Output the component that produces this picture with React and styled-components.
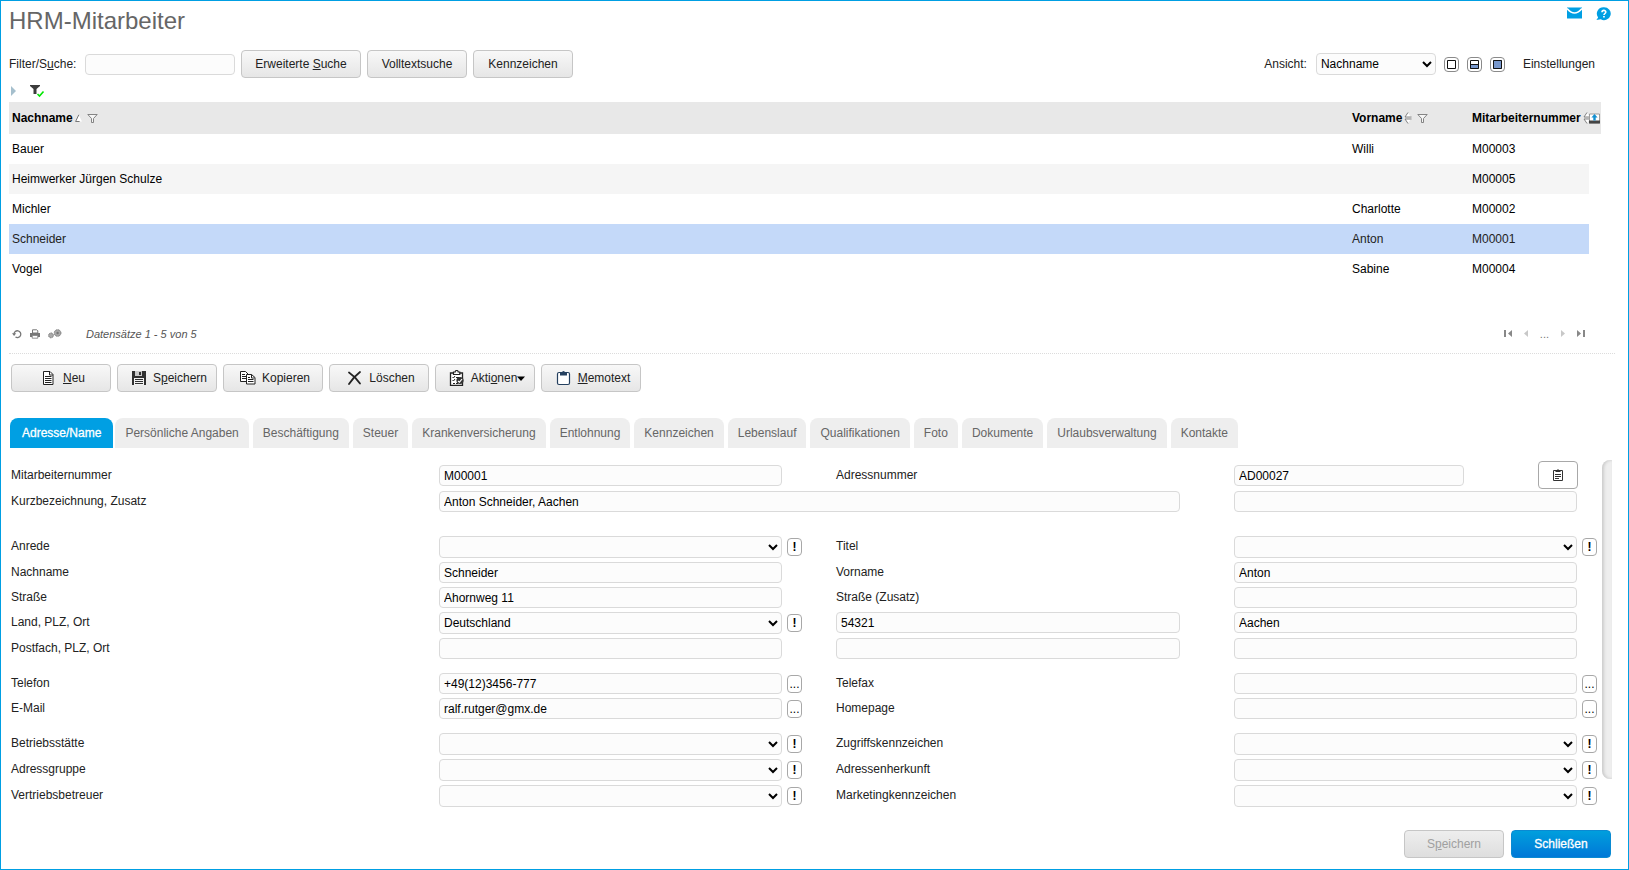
import React, { useState } from "react";
import styled, { createGlobalStyle, css } from "styled-components";

const GlobalStyle = createGlobalStyle`
    * {
        box-sizing: border-box;
    }
    body {
        margin: 0;
        background-color: #ffffff;
        color: #222222;
    }
    body, button, input, select, table {
        font-family: "Liberation Sans", Arial, sans-serif;
        font-size: 12px;
    }
    svg {
        display: block;
        flex: none;
    }
`;

const Page = styled.div`
    display: flex;
    flex-direction: column;
    min-height: 100vh;
    padding: 0 13px 11px 8px;
    border: 1px solid #009fe3;
`;

const Header = styled.header`
    display: flex;
    justify-content: space-between;
    height: 49px;
`;
const Title = styled.h1`
    margin: 0;
    font-size: 24px;
    font-weight: normal;
    line-height: 40px;
    color: #666666;
`;
const Header_links = styled.nav`
    display: flex;
    gap: 14px;
    padding: 6px 4px 0 0;
`;

const plainButton = css`
    display: flex;
    align-items: center;
    justify-content: center;
    padding: 0;
    border: none;
    background: none;
    cursor: pointer;
`;
const Icon_button = styled.button`
    ${plainButton}
`;

const field = css`
    min-width: 0;
    margin: 0;
    border: 1px solid #dadada;
    border-radius: 4px;
    background-color: #fcfcfc;
    color: #000000;
`;
const Text_input = styled.input`
    ${field}
    flex: ${(props) => (props.$width ? "none" : "1")};
    width: ${(props) => props.$width || "auto"};
    height: 21px;
    padding: 0 4px;
`;
const Select = styled.select`
    ${field}
    flex: ${(props) => (props.$width ? "none" : "1")};
    width: ${(props) => props.$width || "auto"};
    height: 22px;
    padding: 0;
`;

const Button = styled.button`
    display: flex;
    align-items: center;
    justify-content: center;
    width: ${(props) => props.$width || "100px"};
    height: 28px;
    padding: 0;
    border: 1px solid #c6c6c6;
    border-radius: 4px;
    background: linear-gradient(#f8f8f8, #e6e6e6);
    color: #222222;
    cursor: pointer;
    &:disabled {
        background: linear-gradient(#eeeeee, #dedede);
        color: #a0a0a0;
        cursor: default;
    }
`;
const Primary_button = styled(Button)`
    border-color: #0a8ad2;
    background: linear-gradient(#009fdd, #0078d7);
    color: #ffffff;
    -webkit-text-stroke: 0.3px #ffffff;
`;
const Button_icon = styled.span`
    width: 16px;
    margin: 0 6px 0 4px;
`;

const Filter_bar = styled.div`
    display: flex;
    align-items: center;
    justify-content: space-between;
    padding-right: 20px;
`;
const Filter_group = styled.div`
    display: flex;
    align-items: center;
    gap: 6px;
`;
const Filter_label = styled.label`
    min-width: 70px;
`;
const View_label = styled.label`
    margin-right: 3px;
`;
const View_modes = styled.div`
    display: flex;
    gap: 8px;
    margin: 0 12px 0 2px;
`;
const View_mode = styled.button`
    ${plainButton}
    width: 15px;
    height: 15px;
    border: 1px solid #8a8a8a;
    border-radius: 4px;
`;
const Settings_link = styled.a`
    color: #222222;
    text-decoration: none;
`;
const Filter_state = styled.div`
    display: flex;
    align-items: center;
    gap: 13px;
    height: 24px;
    padding: 2px 0 0 2px;
`;

const List = styled.div`
    min-height: 212px;
    padding-right: 14px;
`;
const Table = styled.table`
    width: 100%;
    table-layout: fixed;
    border-collapse: collapse;
    color: #000000;
`;
const Head_cell = styled.th`
    width: ${(props) => props.$width || "auto"};
    height: 32px;
    padding: ${(props) => (props.$tool ? "0" : "0 0 0 3px")};
    overflow: hidden;
    background-color: #e8e8e8;
    text-align: left;
`;
const Head_content = styled.div`
    display: flex;
    align-items: center;
    gap: 5px;
`;
const Head_label = styled.span`
    display: flex;
    align-items: center;
    gap: 2px;
`;
const Row = styled.tr`
    background-color: ${(props) => (props.$selected ? "#c4d9f9" : props.$striped ? "#f5f5f5" : "#ffffff")};
    color: ${(props) => (props.$selected ? "#222222" : "#000000")};
    cursor: pointer;
`;
const Cell = styled.td`
    height: 30px;
    padding: 0 0 0 3px;
`;
const Spare_cell = styled.td`
    background-color: #ffffff;
`;

const List_footer = styled.div`
    display: flex;
    align-items: center;
    justify-content: space-between;
    height: 40px;
    border-bottom: 1px dotted #dcdcdc;
`;
const List_tools = styled.div`
    display: flex;
    align-items: center;
    gap: 8px;
    padding-left: 3px;
`;
const Record_count = styled.span`
    margin-left: 16px;
    font-size: 11px;
    font-style: italic;
    color: #555555;
`;
const Pager = styled.div`
    display: flex;
    align-items: center;
    gap: 12px;
    padding-right: 30px;
    font-size: 11px;
    color: #777777;
`;

const Toolbar = styled.div`
    display: flex;
    gap: 6px;
    margin: 10px 0 26px;
    padding-left: 2px;
`;

const Tabs = styled.div`
    display: flex;
    gap: 4px;
    padding-left: 1px;
`;
const Tab = styled.button`
    height: 30px;
    margin-right: ${(props) => (props.$active ? "-2px" : "0")};
    padding: ${(props) => (props.$active ? "0 12px" : "0 10px")};
    border: none;
    border-radius: 8px 8px 0 0;
    background-color: ${(props) => (props.$active ? "#009fe3" : "#eeeeee")};
    color: ${(props) => (props.$active ? "#ffffff" : "#666666")};
    -webkit-text-stroke: ${(props) => (props.$active ? "0.3px #ffffff" : "0")};
    white-space: nowrap;
    cursor: pointer;
`;

const Panel = styled.div`
    display: flex;
    gap: 5px;
    margin: 12px 0 22px;
    padding: 0 3px 0 2px;
`;
const Form = styled.form`
    display: flex;
    flex: 1;
    flex-direction: column;
    gap: 14px;
    padding-top: 5px;
`;
const Form_group = styled.div`
    display: flex;
    flex-direction: column;
    gap: 4px;
    padding-bottom: ${(props) => (props.$spaced ? "10px" : "0")};
`;
const Form_row = styled.div`
    display: grid;
    grid-template-columns: minmax(0, 428fr) minmax(0, 397fr) minmax(0, 398fr) minmax(0, 363fr);
    align-items: start;
    min-height: ${(props) => (props.$tall ? "22px" : "21px")};
`;
const Form_label = styled.label`
    line-height: 21px;
`;
const Form_field = styled.div`
    display: flex;
    grid-column: span ${(props) => props.$span || 1};
    gap: 5px;
    padding-right: ${(props) => (props.$last ? "0" : "34px")};
`;
const Number_field = styled(Form_field)`
    justify-content: space-between;
    padding-right: 19px;
`;
const Side_slot = styled.span`
    display: flex;
    flex: none;
    width: 15px;
`;
const Side_button = styled.button`
    width: 15px;
    height: 18px;
    margin-top: 2px;
    padding: 0;
    border: 1px solid #a8a8a8;
    border-radius: 4px;
    background-color: #ffffff;
    font-weight: ${(props) => (props.$bold ? "bold" : "normal")};
    line-height: 15px;
    color: #000000;
    cursor: pointer;
`;
const Address_button = styled.button`
    ${plainButton}
    width: 40px;
    height: 28px;
    margin: -4px 0 -3px;
    border: 1px solid #a8a8a8;
    border-radius: 4px;
    background-color: #ffffff;
`;
const Scroll_thumb = styled.div`
    width: 10px;
    margin-bottom: 28px;
    border-radius: 8px 0 0 8px;
    background-color: #eeeeee;
    box-shadow: inset 2px 0 3px #cccccc;
`;

const Page_footer = styled.footer`
    display: flex;
    justify-content: flex-end;
    gap: 7px;
    margin-top: auto;
    padding-right: 4px;
`;

const MailIcon = () => (
    <svg width="15" height="12" viewBox="0 0 15 12">
        <path d="M0 0.5h15v11H0z" fill="#009fe3" />
        <path d="M0 1.5Q7.5 10.5 15 1.5" fill="none" stroke="#ffffff" strokeWidth="1.6" />
    </svg>
);
const HelpIcon = () => (
    <svg width="15" height="14" viewBox="0 0 15 14">
        <path d="M8 0.3a6.7 6.4 0 1 1-3.2 12L0.4 13l1.7-2.6A6.6 6.4 0 0 1 8 .3z" fill="#009fe3" />
        <path d="M6 5.2c0-2.4 3.8-2.3 3.8-.2 0 1.5-1.8 1.5-1.8 3" fill="none" stroke="#ffffff" strokeWidth="1.6" />
        <path d="M7.1 9h1.7v1.6H7.1z" fill="#ffffff" />
    </svg>
);
const ExpandIcon = () => (
    <svg width="5" height="10" viewBox="0 0 5 10">
        <path d="M0 0l5 5-5 5z" fill="#a5bfcd" />
    </svg>
);
const FilterActiveIcon = () => (
    <svg width="16" height="14" viewBox="0 0 16 14">
        <path d="M1 1h10v1L7.5 5v5h-3V5L1 2z" fill="#3c3c3c" />
        <path d="M8.5 10l2 2 4-4.5" fill="none" stroke="#00e600" strokeWidth="1.6" />
    </svg>
);
const FunnelIcon = () => (
    <svg width="11" height="9" viewBox="0 0 11 9">
        <path d="M0.8 0.5h9.4L6.5 4.5v4h-2v-4z" fill="#f6f6f6" stroke="#777777" strokeWidth="0.9" />
    </svg>
);
const SortUpIcon = () => (
    <svg width="7" height="9" viewBox="0 0 7 9">
        <path d="M3.8 1L7 7.500H.5z" fill="#ffffff" />
        <path d="M3.8 0.800L.6 7.500h4" fill="none" stroke="#777777" />
    </svg>
);
const SortIcon = () => (
    <svg width="8" height="12" viewBox="0 0 8 12">
        <path d="M4 1l3 4H1zM4 11l3-4H1z" fill="#ffffff" />
        <path d="M4 0.500L1 5h6.500M4 11.500L1 7h6.500" fill="none" stroke="#777777" strokeWidth="0.900" />
    </svg>
);
const ExportIcon = () => (
    <svg width="11" height="11" viewBox="0 0 11 11">
        <path d="M0.5 1h10v9H.5z" fill="#ffffff" stroke="#888888" strokeWidth="0.8" />
        <path d="M0 7.500h11v3H0z" fill="#444444" />
        <path d="M5.5 1L8.6 4.4H6.7V7.6H4.3V4.4H2.4z" fill="#1490d0" />
    </svg>
);
const ViewIcon = ({ mode }) => (
    <svg width="9" height="9" viewBox="0 0 9 9">
        {mode === "full" && <path d="M0 0h9v9H0z" fill="#7797cc" />}
        {mode === "split" && <path d="M0 4h9v5H0z" fill="#7797cc" />}
        <path d="M0.5 0.5h8v8h-8z" fill="none" stroke="#111111" />
        {mode === "split" && <path d="M0 4.5h9" stroke="#111111" />}
    </svg>
);

const RefreshIcon = () => (
    <svg width="10" height="10" viewBox="0 0 10 10">
        <path d="M2 5.2a3.4 3.4 0 1 1 1.500 2.800" fill="none" stroke="#777777" strokeWidth="1.3" />
        <path d="M0 4.3h4.2L2.1 7z" fill="#777777" />
    </svg>
);
const PrintIcon = () => (
    <svg width="10" height="10" viewBox="0 0 10 10">
        <path d="M2.5 0.8h4.3l1 1V4H2.5z" fill="#ffffff" stroke="#777777" />
        <path d="M0 4h10v4H0z" fill="#777777" />
        <path d="M2.2 6.4h5.6v2.8H2.2z" fill="#ffffff" stroke="#777777" strokeWidth="0.8" />
    </svg>
);
const GearsIcon = () => (
    <svg width="14" height="10" viewBox="0 0 14 10">
        <circle cx="3" cy="6.4" r="2.4" fill="#aaaaaa" stroke="#777777" strokeDasharray="1.2 0.5" />
        <circle cx="9.6" cy="4" r="3.3" fill="#aaaaaa" stroke="#777777" strokeDasharray="1.4 0.5" />
        <circle cx="9.6" cy="4" r="1.2" fill="#777777" />
    </svg>
);
const PagerEndIcon = ({ last }) => (
    <svg width="8" height="7" viewBox="0 0 8 7">
        <path d={last ? "M0 0l4 3.5L0 7zM6 0h2v7H6z" : "M8 0L4 3.5 8 7zM0 0h2v7H0z"} fill="#888888" />
    </svg>
);
const PagerStepIcon = ({ next }) => (
    <svg width="4" height="7" viewBox="0 0 4 7">
        <path d={next ? "M0 0l4 3.5L0 7z" : "M4 0L0 3.5 4 7z"} fill="#c8c8c8" />
    </svg>
);

const NewIcon = () => (
    <svg width="16" height="16" viewBox="0 0 16 16">
        <path d="M2.5 1.5h6.500l3 3v10h-9.500z" fill="#ffffff" stroke="#222222" />
        <path d="M8.5 1.5v3.500h3.500M4 6.5h6.500M4 8.5h6.500M4 10.5h6.500M4 12.5h6.500" fill="none" stroke="#222222" />
    </svg>
);
const SaveIcon = () => (
    <svg width="16" height="16" viewBox="0 0 16 16">
        <path d="M1 1h14v14H1z" fill="#303030" />
        <path d="M4 1h7v5H4z" fill="#c9c9c9" />
        <path d="M8 2h2v3H8z" fill="#303030" />
        <path d="M3 8h10v7H3z" fill="#f2f2f2" />
        <path d="M4 9.5h8M4 11.5h8M4 13.5h8" stroke="#303030" />
    </svg>
);
const CopyIcon = () => (
    <svg width="16" height="16" viewBox="0 0 16 16">
        <path d="M0.5 1.5h5l2.5 2.5v7.500h-7.5z" fill="#ffffff" stroke="#222222" />
        <path d="M2 4.5h3M2 6.5h5M2 8.5h5" stroke="#222222" />
        <path d="M6.5 4.5h5l3.500 3v6.500h-8.500z" fill="#ffffff" stroke="#222222" />
        <path d="M11.5 4.5v3.500h3M8 7.500h2M8 9.5h5.500M8 11.5h5.500" fill="none" stroke="#222222" />
    </svg>
);
const DeleteIcon = () => (
    <svg width="16" height="16" viewBox="0 0 16 16">
        <path d="M2 2.5Q8 6.5 13 13.5M13 2Q6.500 7 2 14" fill="none" stroke="#222222" strokeWidth="1.8" strokeLinecap="round" />
    </svg>
);
const ActionsIcon = () => (
    <svg width="16" height="16" viewBox="0 0 16 16">
        <path d="M1.5 3h12v12.300h-12z" fill="#ffffff" stroke="#222222" strokeWidth="1.3" />
        <path d="M4.5 4.500v-2.500h1.7a1.5 1.5 0 0 1 3 0h1.6v2.500z" fill="#ffffff" stroke="#222222" strokeWidth="1.2" />
        <path d="M3.5 7l1 1 1.5-2M3.5 10l1 1 1.5-2M4 13.5h2M7 7.5h3M7 13.5h2" fill="none" stroke="#222222" />
        <circle cx="11" cy="10.5" r="3.6" fill="#333333" />
        <path d="M9 11l1.5 1.2L13 9" fill="none" stroke="#ffffff" strokeWidth="1.2" />
    </svg>
);
const MemoIcon = () => (
    <svg width="16" height="16" viewBox="0 0 16 16">
        <rect x="1.500" y="2.5" width="12" height="12" rx="1.5" fill="#ffffff" stroke="#25405f" strokeWidth="1.2" />
        <path d="M4 5.5V2.500h2a1.5 1.5 0 0 1 3 0h2v3z" fill="#25405f" />
    </svg>
);
const DropIcon = () => (
    <svg width="8" height="5" viewBox="0 0 8 5">
        <path d="M0 0.5h8l-4 4.5z" fill="#000000" />
    </svg>
);
const ClipboardIcon = () => (
    <svg width="12" height="14" viewBox="0 0 12 14">
        <path d="M1.5 2.5h9v10h-9z" fill="none" stroke="#333333" />
        <path d="M3.5 4V2h1.5a1.1 1.1 0 0 1 2 0h1.5v2z" fill="#333333" />
        <path d="M3 6.500h6M3 8.500h6M3 10.500h4" stroke="#333333" />
    </svg>
);

const employees = [
    { lastName: "Bauer", firstName: "Willi", number: "M00003" },
    { lastName: "Heimwerker Jürgen Schulze", firstName: "", number: "M00005" },
    { lastName: "Michler", firstName: "Charlotte", number: "M00002" },
    { lastName: "Schneider", firstName: "Anton", number: "M00001" },
    { lastName: "Vogel", firstName: "Sabine", number: "M00004" },
];

const tabs = [
    "Adresse/Name",
    "Persönliche Angaben",
    "Beschäftigung",
    "Steuer",
    "Krankenversicherung",
    "Entlohnung",
    "Kennzeichen",
    "Lebenslauf",
    "Qualifikationen",
    "Foto",
    "Dokumente",
    "Urlaubsverwaltung",
    "Kontakte",
];

function SelectField({ id, label, value, last }) {
    return (
        <Form_field $last={last}>
            <Select id={id} aria-label={label} defaultValue={value}>
                <option>{value}</option>
            </Select>
            <Side_slot>
                <Side_button type="button" $bold>
                    !
                </Side_button>
            </Side_slot>
        </Form_field>
    );
}

function InputField({ id, label, value, last, more, span }) {
    return (
        <Form_field $last={last} $span={span}>
            <Text_input id={id} aria-label={label} defaultValue={value} />
            <Side_slot>{more && <Side_button type="button">...</Side_button>}</Side_slot>
        </Form_field>
    );
}

function SelectRow({ left, right }) {
    return (
        <Form_row $tall>
            <Form_label htmlFor={left}>{left}</Form_label>
            <SelectField id={left} />
            <Form_label htmlFor={right}>{right}</Form_label>
            <SelectField id={right} last />
        </Form_row>
    );
}

function InputRow({ left, leftValue, right, rightValue, more }) {
    return (
        <Form_row>
            <Form_label htmlFor={left}>{left}</Form_label>
            <InputField id={left} value={leftValue} more={more} />
            <Form_label htmlFor={right}>{right}</Form_label>
            <InputField id={right} value={rightValue} more={more} last />
        </Form_row>
    );
}

function EmployeeList() {
    const [selected, setSelected] = useState("M00001");
    return (
        <List>
            <Table>
                <thead>
                    <tr>
                        <Head_cell>
                            <Head_content>
                                <Head_label>
                                    Nachname <SortUpIcon />
                                </Head_label>
                                <FunnelIcon />
                            </Head_content>
                        </Head_cell>
                        <Head_cell $width="120px">
                            <Head_content>
                                <Head_label>
                                    Vorname <SortIcon />
                                </Head_label>
                                <FunnelIcon />
                            </Head_content>
                        </Head_cell>
                        <Head_cell $width="120px">
                            <Head_content>
                                <Head_label>
                                    Mitarbeiternummer <SortIcon />
                                </Head_label>
                            </Head_content>
                        </Head_cell>
                        <Head_cell $width="12px" $tool>
                            <Icon_button aria-label="Export">
                                <ExportIcon />
                            </Icon_button>
                        </Head_cell>
                    </tr>
                </thead>
                <tbody>
                    {employees.map((employee, index) => (
                        <Row
                            key={employee.number}
                            $striped={index % 2 === 1}
                            $selected={employee.number === selected}
                            onClick={() => setSelected(employee.number)}
                        >
                            <Cell>{employee.lastName}</Cell>
                            <Cell>{employee.firstName}</Cell>
                            <Cell>{employee.number}</Cell>
                            <Spare_cell />
                        </Row>
                    ))}
                </tbody>
            </Table>
        </List>
    );
}

function AddressForm() {
    return (
        <Form>
            <Form_group $spaced>
                <Form_row $tall>
                    <Form_label htmlFor="number">Mitarbeiternummer</Form_label>
                    <InputField id="number" value="M00001" />
                    <Form_label htmlFor="address">Adressnummer</Form_label>
                    <Number_field>
                        <Text_input id="address" $width="67%" defaultValue="AD00027" />
                        <Address_button type="button" aria-label="Adresse">
                            <ClipboardIcon />
                        </Address_button>
                    </Number_field>
                </Form_row>
                <Form_row>
                    <Form_label htmlFor="short">Kurzbezeichnung, Zusatz</Form_label>
                    <InputField id="short" value="Anton Schneider, Aachen" span={2} />
                    <InputField label="Zusatz" last />
                </Form_row>
            </Form_group>
            <Form_group>
                <SelectRow left="Anrede" right="Titel" />
                <InputRow left="Nachname" leftValue="Schneider" right="Vorname" rightValue="Anton" />
                <InputRow left="Straße" leftValue="Ahornweg 11" right="Straße (Zusatz)" />
                <Form_row $tall>
                    <Form_label htmlFor="country">Land, PLZ, Ort</Form_label>
                    <SelectField id="country" value="Deutschland" />
                    <InputField label="PLZ" value="54321" />
                    <InputField label="Ort" value="Aachen" last />
                </Form_row>
                <Form_row>
                    <Form_label htmlFor="pobox">Postfach, PLZ, Ort</Form_label>
                    <InputField id="pobox" />
                    <InputField label="PLZ" />
                    <InputField label="Ort" last />
                </Form_row>
            </Form_group>
            <Form_group>
                <InputRow left="Telefon" leftValue="+49(12)3456-777" right="Telefax" more />
                <InputRow left="E-Mail" leftValue="ralf.rutger@gmx.de" right="Homepage" more />
            </Form_group>
            <Form_group>
                <SelectRow left="Betriebsstätte" right="Zugriffskennzeichen" />
                <SelectRow left="Adressgruppe" right="Adressenherkunft" />
                <SelectRow left="Vertriebsbetreuer" right="Marketingkennzeichen" />
            </Form_group>
        </Form>
    );
}

function App() {
    const [activeTab, setActiveTab] = useState(tabs[0]);
    return (
        <Page>
            <GlobalStyle />
            <Header>
                <Title>HRM-Mitarbeiter</Title>
                <Header_links>
                    <a href="#mail" aria-label="Mail">
                        <MailIcon />
                    </a>
                    <a href="#help" aria-label="Hilfe">
                        <HelpIcon />
                    </a>
                </Header_links>
            </Header>
            <Filter_bar>
                <Filter_group>
                    <Filter_label htmlFor="search">
                        Filter/S<u>u</u>che:
                    </Filter_label>
                    <Text_input id="search" $width="150px" />
                    <Button $width="120px">
                        <span>
                            Erweiterte <u>S</u>uche
                        </span>
                    </Button>
                    <Button>Volltextsuche</Button>
                    <Button>Kennzeichen</Button>
                </Filter_group>
                <Filter_group>
                    <View_label htmlFor="view">Ansicht:</View_label>
                    <Select id="view" $width="120px" defaultValue="Nachname">
                        <option>Nachname</option>
                    </Select>
                    <View_modes>
                        <View_mode aria-label="Formular">
                            <ViewIcon />
                        </View_mode>
                        <View_mode aria-label="Geteilt">
                            <ViewIcon mode="split" />
                        </View_mode>
                        <View_mode aria-label="Liste">
                            <ViewIcon mode="full" />
                        </View_mode>
                    </View_modes>
                    <Settings_link href="#settings">Einstellungen</Settings_link>
                </Filter_group>
            </Filter_bar>
            <Filter_state>
                <Icon_button aria-label="Aufklappen">
                    <ExpandIcon />
                </Icon_button>
                <Icon_button aria-label="Filter">
                    <FilterActiveIcon />
                </Icon_button>
            </Filter_state>
            <EmployeeList />
            <List_footer>
                <List_tools>
                    <Icon_button aria-label="Aktualisieren">
                        <RefreshIcon />
                    </Icon_button>
                    <Icon_button aria-label="Drucken">
                        <PrintIcon />
                    </Icon_button>
                    <Icon_button aria-label="Optionen">
                        <GearsIcon />
                    </Icon_button>
                    <Record_count>Datensätze 1 - 5 von 5</Record_count>
                </List_tools>
                <Pager>
                    <Icon_button aria-label="Erste Seite">
                        <PagerEndIcon />
                    </Icon_button>
                    <Icon_button aria-label="Vorherige Seite">
                        <PagerStepIcon />
                    </Icon_button>
                    <span>...</span>
                    <Icon_button aria-label="Nächste Seite">
                        <PagerStepIcon next />
                    </Icon_button>
                    <Icon_button aria-label="Letzte Seite">
                        <PagerEndIcon last />
                    </Icon_button>
                </Pager>
            </List_footer>
            <Toolbar>
                <Button>
                    <Button_icon>
                        <NewIcon />
                    </Button_icon>
                    <u>N</u>eu
                </Button>
                <Button>
                    <Button_icon>
                        <SaveIcon />
                    </Button_icon>
                    S<u>p</u>eichern
                </Button>
                <Button>
                    <Button_icon>
                        <CopyIcon />
                    </Button_icon>
                    Kopieren
                </Button>
                <Button>
                    <Button_icon>
                        <DeleteIcon />
                    </Button_icon>
                    Löschen
                </Button>
                <Button>
                    <Button_icon>
                        <ActionsIcon />
                    </Button_icon>
                    Akti<u>o</u>nen
                    <DropIcon />
                </Button>
                <Button>
                    <Button_icon>
                        <MemoIcon />
                    </Button_icon>
                    <u>M</u>emotext
                </Button>
            </Toolbar>
            <Tabs role="tablist">
                {tabs.map((tab) => (
                    <Tab
                        key={tab}
                        role="tab"
                        aria-selected={tab === activeTab}
                        $active={tab === activeTab}
                        onClick={() => setActiveTab(tab)}
                    >
                        {tab}
                    </Tab>
                ))}
            </Tabs>
            <Panel>
                <AddressForm />
                <Scroll_thumb />
            </Panel>
            <Page_footer>
                <Button disabled>
                    S<u>p</u>eichern
                </Button>
                <Primary_button>Schließen</Primary_button>
            </Page_footer>
        </Page>
    );
}

export default App;
